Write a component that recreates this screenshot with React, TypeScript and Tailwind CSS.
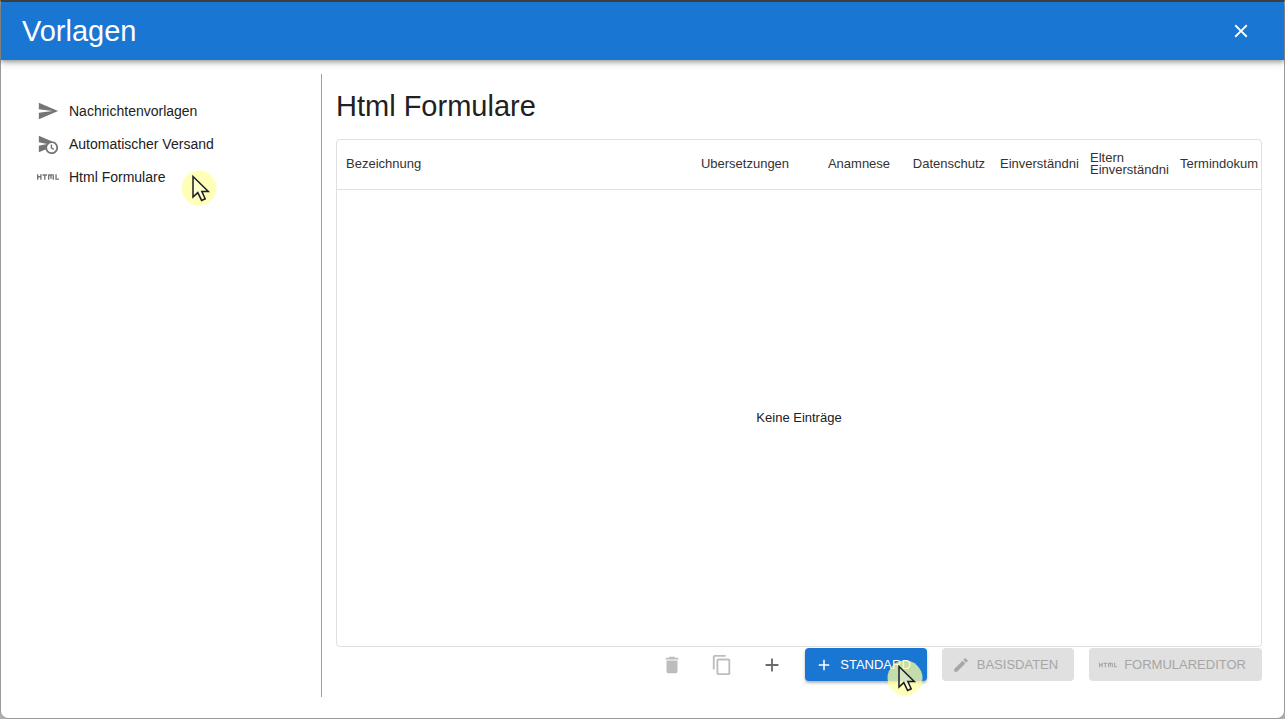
import React from "react";
import {
  MdAdd,
  MdClose,
  MdContentCopy,
  MdDelete,
  MdEdit,
  MdHtml,
  MdScheduleSend,
  MdSend,
} from "react-icons/md";

const navItems = [
  { label: "Nachrichtenvorlagen", icon: MdSend },
  { label: "Automatischer Versand", icon: MdScheduleSend },
  { label: "Html Formulare", icon: MdHtml },
];

const columns = [
  { label: "Bezeichnung", className: "pl-[9px] text-left" },
  { label: "Ubersetzungen", className: "w-[138px] text-center" },
  { label: "Anamnese", className: "w-[90px] text-center" },
  { label: "Datenschutz", className: "w-[90px] text-center" },
  { label: "Einverständni", className: "w-[90px] pl-1.5 text-left" },
  { label: "Eltern Einverständni", className: "w-[90px] pl-1.5 text-left" },
  { label: "Termindokum", className: "w-[87px] pl-1.5 text-left" },
];

const Pointer = () => (
  <svg
    className="h-9 w-9"
    viewBox="0 0 36 36"
    aria-hidden="true">
    <circle cx="18" cy="18" r="17.5" fill="#ffffa0" fillOpacity="0.75" />
    <path
      d="M12 6.5V27L16.8 22.6L20.6 30.4L24.2 28.8L20.8 21.4H27.3Z"
      fill="#ffffff"
      fillOpacity="0.25"
      stroke="#1c1c2c"
      strokeWidth="1.5"
    />
  </svg>
);

const IconButton = ({
  label,
  disabled,
  children,
}: {
  label: string;
  disabled?: boolean;
  children: React.ReactNode;
}) => (
  <button
    type="button"
    aria-label={label}
    disabled={disabled}
    className="flex h-[33px] w-9 items-center justify-center text-[#6b6b6b] disabled:text-[#bdbdbd]">
    {children}
  </button>
);

const ActionButton = ({ children }: { children: React.ReactNode }) => (
  <button
    type="button"
    disabled
    className="flex h-[33px] items-center gap-[7px] rounded bg-[#e0e0e0] pr-4 pl-2.5 text-[13px] uppercase text-[#a6a6a6]">
    {children}
  </button>
);

const App = () => {
  return (
    <div className="flex min-h-screen flex-col bg-[#b0b0b0] font-['Liberation_Sans',Arial,sans-serif] text-[#212121]">
      <div className="flex flex-1 flex-col rounded-b-lg border border-t-2 border-[#9a9a9a] border-t-[#3f4145] bg-white">
        <header className="flex h-[58px] items-center justify-between bg-[#1976d2] pr-8 pl-[21px] text-white shadow-[0_2px_4px_rgba(0,0,0,0.3),0_4px_8px_rgba(0,0,0,0.12)]">
          <h1 className="text-[29px] leading-9">Vorlagen</h1>
          <button type="button" aria-label="Schließen">
            <MdClose size={22} />
          </button>
        </header>

        <div className="flex flex-1 pt-3.5 pr-[22px] pb-[21px]">
          <nav className="w-[321px] shrink-0 border-r border-[#9e9e9e] pt-5 pl-9">
            <ul>
              {navItems.map(({ label, icon: Icon }) => (
                <li key={label} className="relative flex h-[33px] items-center">
                  <a href="#" className="flex items-center gap-2.5 text-sm">
                    <Icon size={22} className="text-[#757575]" />
                    {label}
                  </a>
                  {label === "Html Formulare" && (
                    <span className="pointer-events-none absolute top-2.5 left-36">
                      <Pointer />
                    </span>
                  )}
                </li>
              ))}
            </ul>
          </nav>

          <main className="flex min-w-0 flex-1 flex-col pb-4 pl-3.5">
            <h2 className="pt-3.5 pb-[15px] text-[29px] leading-9">
              Html Formulare
            </h2>
            <div className="flex flex-1 rounded border border-[#e0e0e0]">
              <table className="w-full table-fixed text-[13px] leading-3">
                <thead>
                  <tr className="h-[49px] border-b border-[#e0e0e0]">
                    {columns.map(({ label, className }) => (
                      <th
                        key={label}
                        scope="col"
                        className={`font-normal text-[#333333] ${className}`}>
                        {label}
                      </th>
                    ))}
                  </tr>
                </thead>
                <tbody>
                  <tr>
                    <td colSpan={columns.length} className="text-center">
                      Keine Einträge
                    </td>
                  </tr>
                </tbody>
              </table>
            </div>

            <div className="flex items-center justify-end gap-[15px] pt-px">
              <div className="flex gap-3.5">
                <IconButton label="Löschen" disabled>
                  <MdDelete size={22} />
                </IconButton>
                <IconButton label="Kopieren" disabled>
                  <MdContentCopy size={22} />
                </IconButton>
                <IconButton label="Hinzufügen">
                  <MdAdd size={22} />
                </IconButton>
              </div>
              <button
                type="button"
                className="relative flex h-[33px] items-center gap-[7px] rounded bg-[#1976d2] pr-4 pl-2.5 text-[13px] uppercase text-white shadow-[0_2px_3px_rgba(0,0,0,0.3)]">
                <MdAdd size={18} />
                Standard
                <span className="pointer-events-none absolute top-3 right-1">
                  <Pointer />
                </span>
              </button>
              <ActionButton>
                <MdEdit size={18} />
                Basisdaten
              </ActionButton>
              <ActionButton>
                <MdHtml size={18} />
                Formulareditor
              </ActionButton>
            </div>
          </main>
        </div>
      </div>
    </div>
  );
};

export default App;
